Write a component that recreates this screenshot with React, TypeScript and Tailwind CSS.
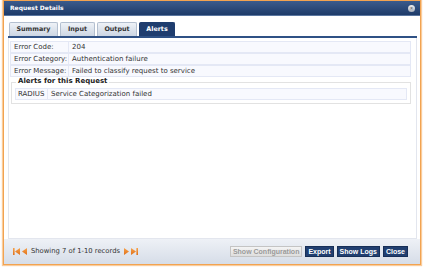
import React from "react";

const body = { fontFamily: '"DejaVu Sans", Verdana, sans-serif' };
const arial = { fontFamily: '"Liberation Sans", Arial, sans-serif' };

function Tab({ label, active, w }: { label: string; active?: boolean; w: string }) {
  return (
    <div
      className={
        "h-[14px] flex items-center justify-center rounded-t-[2px] border border-b-0 text-[6.4px] font-bold " +
        w +
        " " +
        (active
          ? "bg-[#1f3d6e] border-[#1f3d6e] text-white"
          : "bg-gradient-to-b from-[#eef2f7] to-[#cdd6e3] border-[#b3bfcf] text-[#333]")
      }
      style={body}
    >
      {label}
    </div>
  );
}

function Row({ label, value }: { label: string; value: string }) {
  return (
    <div className="flex h-[12px] border border-[#e4e8f5] bg-[#f8f9fe] text-[7px] text-[#333] leading-none">
      <div className="w-[58px] border-r border-[#e4e8f5] pl-[3px] flex items-center">{label}</div>
      <div className="flex-1 pl-[3px] flex items-center">{value}</div>
    </div>
  );
}

function NavIcon({ dir, bar }: { dir: "l" | "r"; bar?: boolean }) {
  return (
    <svg width={bar ? 7 : 5} height="7" viewBox={bar ? "0 0 7 7" : "0 0 5 7"}>
      <defs>
        <linearGradient id="og" x1="0" y1="0" x2="0" y2="1">
          <stop offset="0" stopColor="#f7a24a" />
          <stop offset="1" stopColor="#e0701a" />
        </linearGradient>
      </defs>
      {dir === "l" ? (
        bar ? (
          <>
            <rect x="0" y="0" width="1.6" height="7" fill="url(#og)" />
            <polygon points="7,0 7,7 2,3.5" fill="url(#og)" />
          </>
        ) : (
          <polygon points="5,0 5,7 0,3.5" fill="url(#og)" />
        )
      ) : bar ? (
        <>
          <polygon points="0,0 0,7 5,3.5" fill="url(#og)" />
          <rect x="5.4" y="0" width="1.6" height="7" fill="url(#og)" />
        </>
      ) : (
        <polygon points="0,0 0,7 5,3.5" fill="url(#og)" />
      )}
    </svg>
  );
}

function Btn({ label, disabled }: { label: string; disabled?: boolean }) {
  return (
    <div
      className={
        "h-[11px] px-[2px] flex items-center text-[7px] font-bold leading-none border " +
        (disabled
          ? "bg-gradient-to-b from-[#f4f4f4] to-[#dedede] border-[#c4c4c4] text-[#9a9a9a]"
          : "bg-[#213f70] border-[#172f57] text-white")
      }
      style={arial}
    >
      {label}
    </div>
  );
}

export default function App() {
  return (
    <div className="w-[423px] h-[267px] bg-white relative overflow-hidden">
      <div className="ml-[3px] w-[418px] h-[265px] border border-[#f2a350] shadow-[0_0_1px_1px_rgba(245,170,90,0.6)] flex flex-col">
        {/* title bar */}
        <div className="h-[15px] bg-gradient-to-b from-[#3b5b8c] to-[#1e3b69] border-b border-[#5a76a0] flex items-center justify-between pl-[6px] pr-[5px]">
          <span className="text-white font-bold text-[6px] leading-none" style={body}>
            Request Details
          </span>
          <div className="w-[7px] h-[7px] rounded-full bg-gradient-to-b from-[#f0f0f0] to-[#a9b0bb] flex items-center justify-center">
            <span className="text-[#555] text-[5px] leading-none" style={arial}>×</span>
          </div>
        </div>

        {/* body */}
        <div className="flex-1 bg-white pl-[4px] pr-[3px] pt-[6px] flex flex-col">
          <div className="flex gap-[2px] pl-[1px]">
            <Tab label="Summary" w="w-[49px]" />
            <Tab label="Input" w="w-[35px]" />
            <Tab label="Output" w="w-[40px]" />
            <Tab label="Alerts" w="w-[36px]" active />
          </div>
          <div className="h-[2px] bg-[#2f5185]" />
          <div className="flex-1 border-x border-b border-[#e3e6ee] pl-[1px] pr-[5px] pt-[3px] flex flex-col" style={body}>
            <Row label="Error Code:" value="204" />
            <Row label="Error Category:" value="Authentication failure" />
            <Row label="Error Message:" value="Failed to classify request to service" />
            <div className="mt-[5px] ml-[1px] border border-[#e2e2e2] relative pt-[5px] pb-[3px] px-[3px]">
              <span className="absolute left-[4px] top-[-5px] bg-white px-[2px] text-[7px] font-bold text-[#222] leading-none">
                Alerts for this Request
              </span>
              <div className="flex h-[12px] border border-[#e4e8f5] bg-[#f8f9fe] text-[7px] text-[#333] leading-none">
                <div className="w-[32px] border-r border-[#e4e8f5] pl-[2px] flex items-center">RADIUS</div>
                <div className="flex-1 pl-[3px] flex items-center">Service Categorization failed</div>
              </div>
            </div>
          </div>
        </div>

        {/* footer */}
        <div className="h-[25px] bg-gradient-to-b from-[#eef1f6] to-[#d6dde8] flex items-center pl-[9px] pr-[12px]">
          <div className="flex items-center gap-[2px]">
            <NavIcon dir="l" bar />
            <NavIcon dir="l" />
            <span className="text-[6.8px] text-[#333] mx-[2px] leading-none" style={body}>
              Showing 7 of 1-10 records
            </span>
            <NavIcon dir="r" />
            <NavIcon dir="r" bar />
          </div>
          <div className="ml-auto flex items-center gap-[3px]">
            <Btn label="Show Configuration" disabled />
            <Btn label="Export" />
            <Btn label="Show Logs" />
            <Btn label="Close" />
          </div>
        </div>
      </div>
    </div>
  );
}
